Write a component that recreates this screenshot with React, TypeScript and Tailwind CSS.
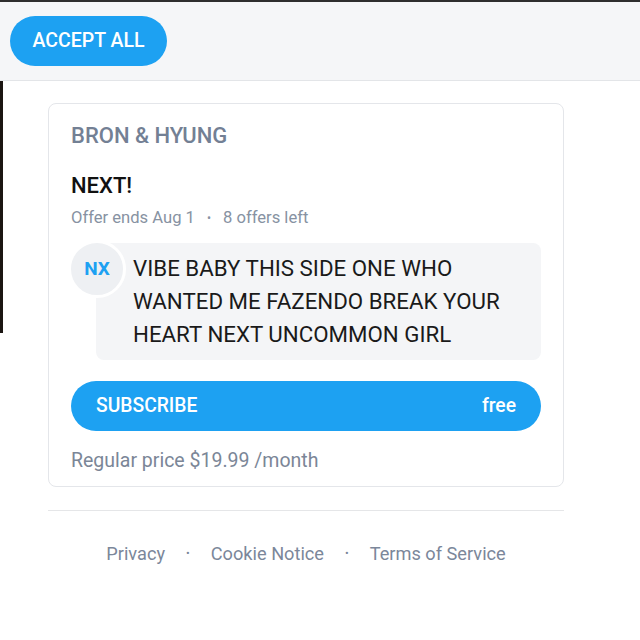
export default function App() {
  const message = 'VIBE BABY THIS SIDE ONE WHO WANTED ME FAZENDO BREAK YOUR HEART NEXT UNCOMMON GIRL';
  const links = ['Privacy', 'Cookie Notice', 'Terms of Service'];

  return (
    <div className="w-[640px] h-[640px] overflow-hidden bg-white font-['Roboto',_'Liberation_Sans',_sans-serif]">
      <header className="h-[81px] border-t-2 border-b border-t-[#2e2e2e] border-b-[#e3e5e8] bg-[#f5f6f8] pl-[10px] pt-[14px]">
        <button className="h-[50px] w-[157px] rounded-full bg-[#1da1f2] text-[19.5px] font-medium text-white">
          ACCEPT ALL
        </button>
      </header>

      <div className="flex">
        <div className="h-[252px] w-[3px] shrink-0 bg-[#1b1512]" />
        <main className="ml-[45px] w-[516px] pt-[22px]">
          <section className="rounded-lg border border-[#e4e6ea] px-[22px] pt-[18px] pb-[12px]">
            <h2 className="text-[22px] leading-[28px] font-medium text-[#738094]">BRON &amp; HYUNG</h2>
            <h3 className="mt-[22px] text-[22px] leading-[28px] font-medium text-[#111]">NEXT!</h3>
            <p className="mt-[8px] flex items-center text-[16.6px] leading-[20px] text-[#8792a2]">
              <span>Offer ends Aug 1</span>
              <span className="mx-[12px] text-[12px]">•</span>
              <span>8 offers left</span>
            </p>

            <div className="relative mt-[15px]">
              <div className="absolute -left-[3px] -top-[3px] flex h-[58px] w-[58px] items-center justify-center rounded-full border-[3px] border-white bg-[#eef0f3] text-[19px] font-bold text-[#1da1f2]">
                NX
              </div>
              <div className="ml-[25px] rounded-lg bg-[#f4f5f7] py-[9px] pl-[37px] pr-[16px] text-[22.3px] leading-[33px] text-[#1a1a1a]">
                {message}
              </div>
            </div>

            <button className="mt-[21px] flex h-[50px] w-full items-center justify-between rounded-full bg-[#1da1f2] pl-[25px] pr-[25px] text-[19.3px] font-medium text-white">
              <span>SUBSCRIBE</span>
              <span>free</span>
            </button>

            <p className="mt-[17px] text-[19.5px] leading-[26px] text-[#7b8697]">Regular price $19.99 /month</p>
          </section>

          <hr className="mt-[23px] border-t border-[#e5e6e8]" />

          <footer className="mt-[31px] flex items-center justify-center text-[18.2px] leading-[24px] text-[#7b879a]">
            {links.map((l, i) => (
              <div key={l} className="flex items-center">
                {i > 0 && <span className="mx-[21px] text-[11px]">•</span>}
                <span>{l}</span>
              </div>
            ))}
          </footer>
        </main>
      </div>
    </div>
  );
}
